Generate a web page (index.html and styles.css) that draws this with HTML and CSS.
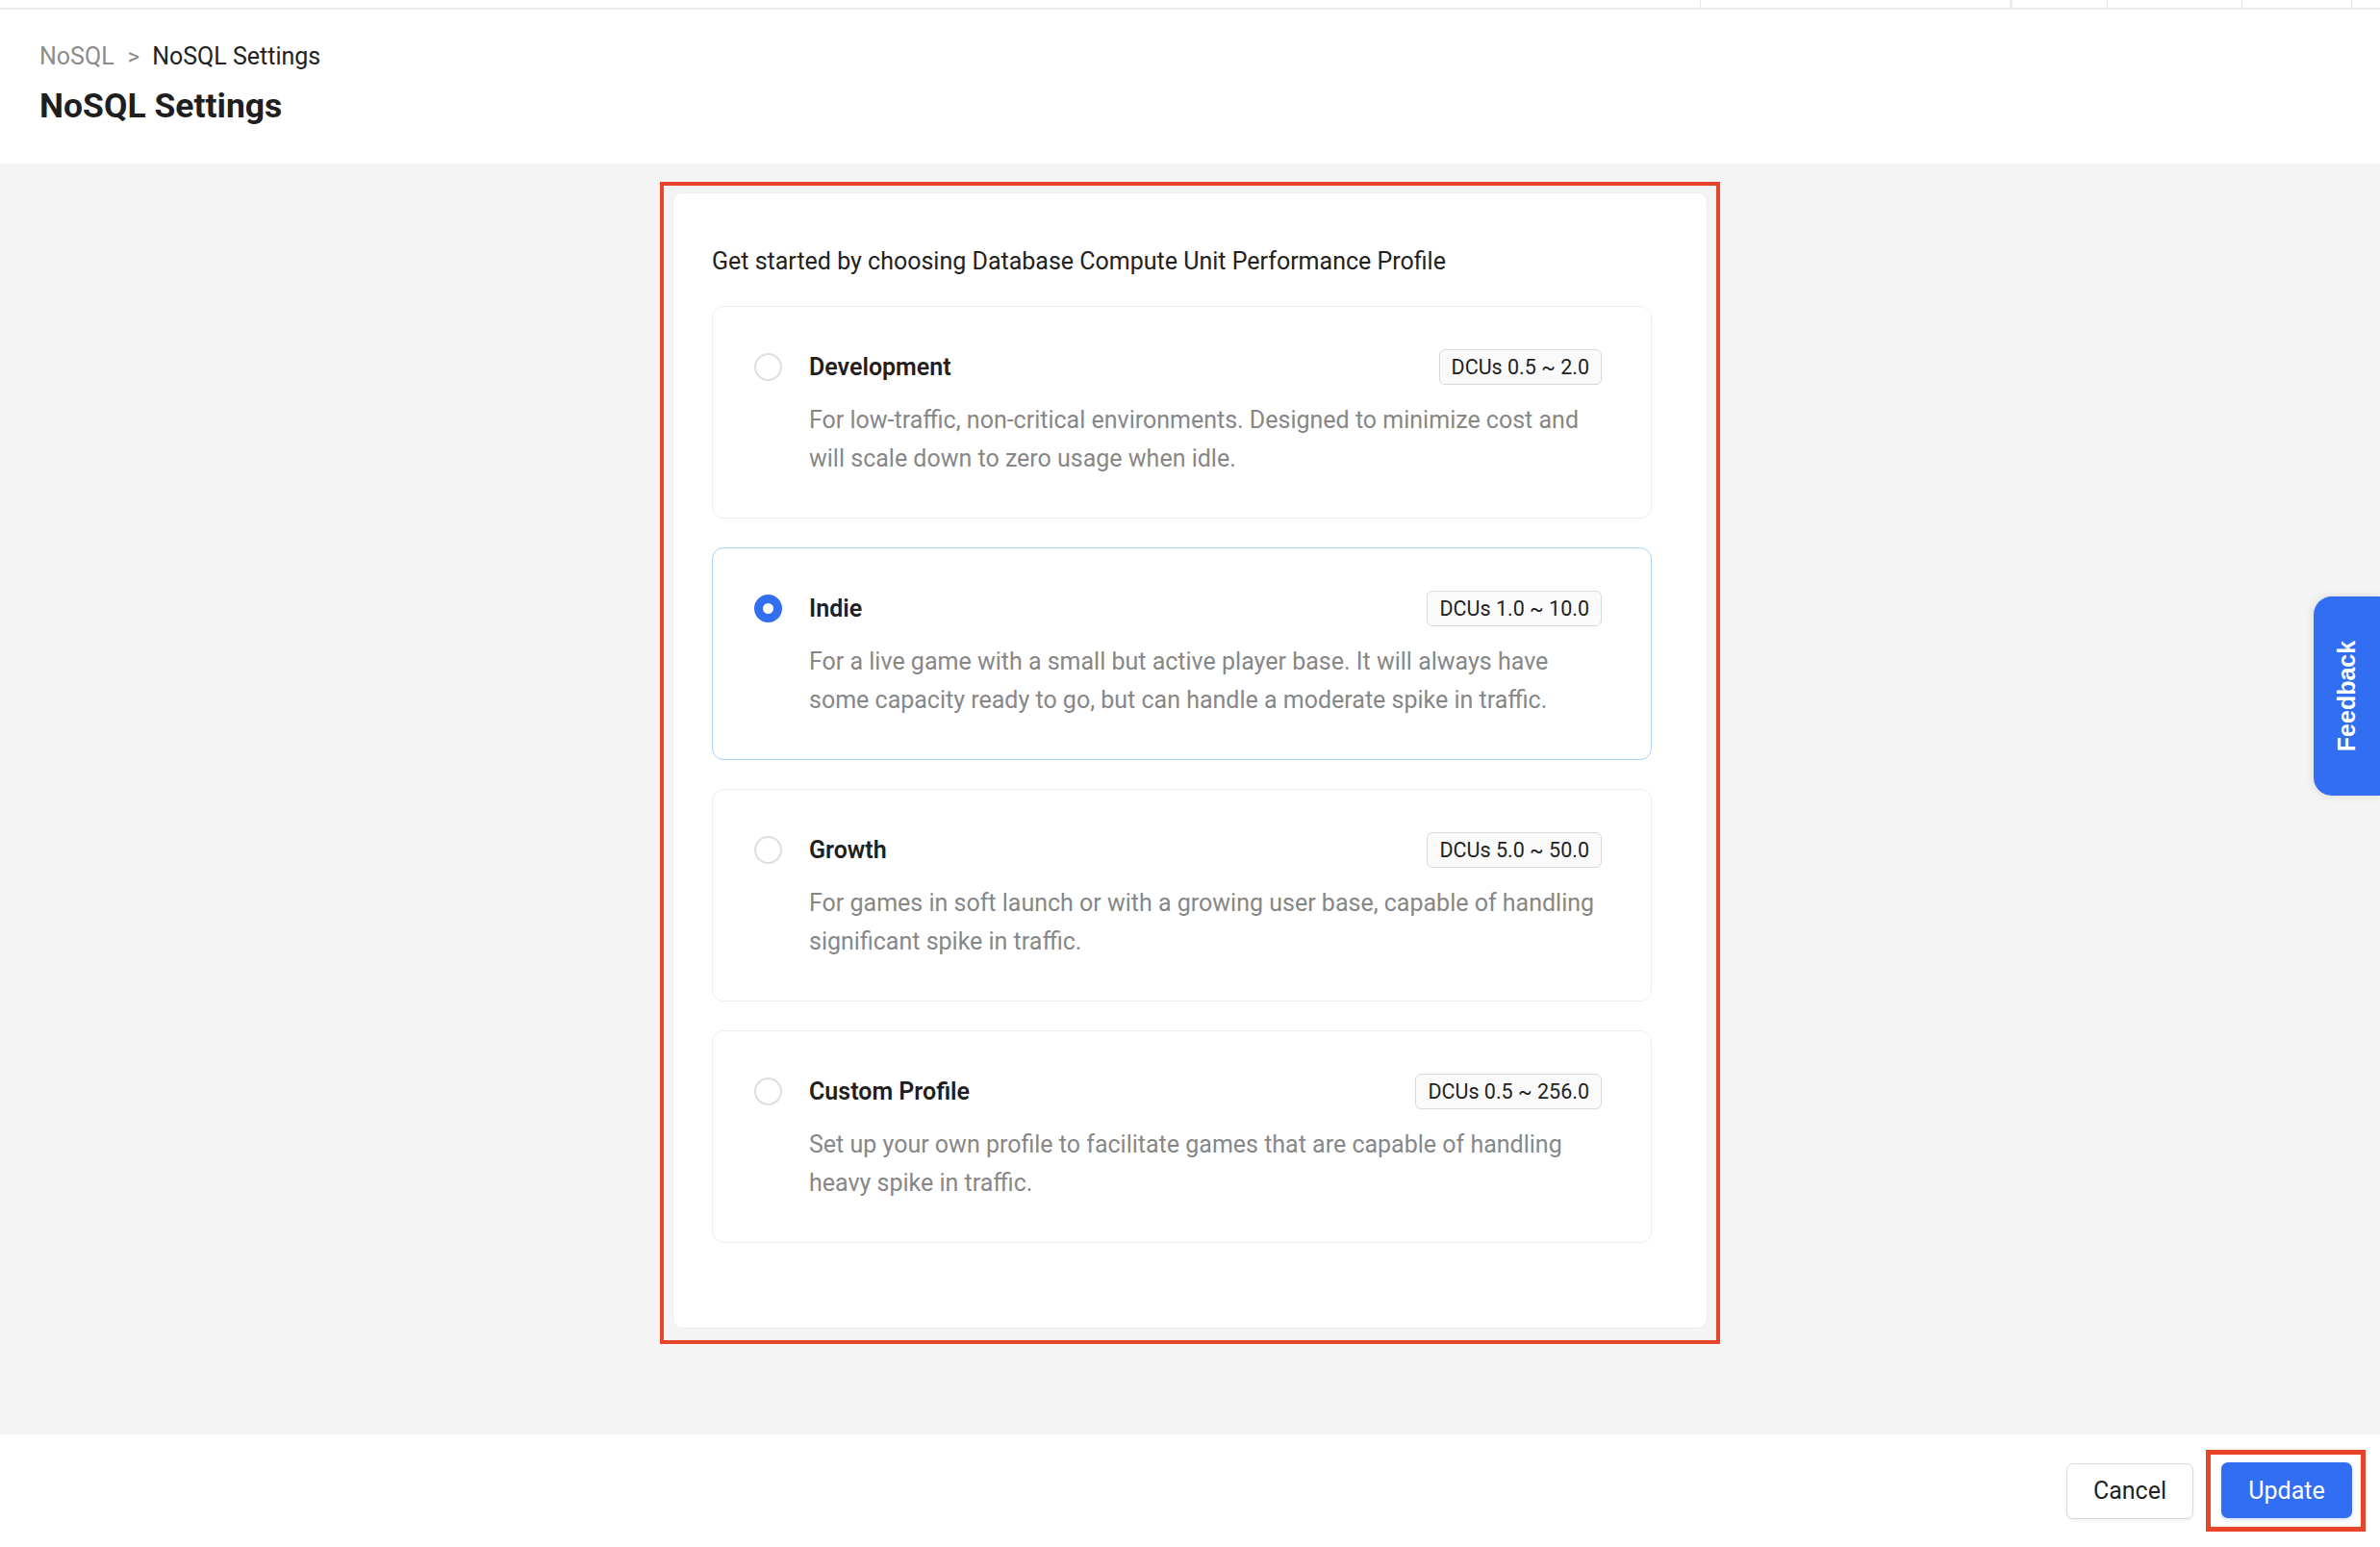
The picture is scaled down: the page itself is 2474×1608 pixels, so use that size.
FILE: index.html
```html
<!DOCTYPE html>
<html lang="en">
<head>
<meta charset="utf-8">
<title>NoSQL Settings</title>
<link rel="stylesheet" href="styles.css">
</head>
<body>
<div class="page">
  <div class="topstrip">
    <span class="div d1"></span>
    <span class="div d2"></span>
    <span class="div d3"></span>
    <span class="div d4"></span>
    <span class="div d5"></span>
  </div>
  <header class="header">
    <nav class="crumbs"><span class="crumb-link">NoSQL</span><span class="crumb-sep">&gt;</span><span class="crumb-current">NoSQL Settings</span></nav>
    <h1 class="title">NoSQL Settings</h1>
  </header>
  <main class="main">
    <div class="annot annot-panel">
      <section class="panel">
        <p class="intro">Get started by choosing Database Compute Unit Performance Profile</p>
        <div class="options">
          <div class="option">
            <div class="opt-head">
              <span class="radio"></span>
              <span class="opt-title">Development</span>
              <span class="badge">DCUs 0.5 ~ 2.0</span>
            </div>
            <p class="opt-desc">For low-traffic, non-critical environments. Designed to minimize cost and will scale down to zero usage when idle.</p>
          </div>
          <div class="option selected">
            <div class="opt-head">
              <span class="radio checked"></span>
              <span class="opt-title">Indie</span>
              <span class="badge">DCUs 1.0 ~ 10.0</span>
            </div>
            <p class="opt-desc">For a live game with a small but active player base. It will always have some capacity ready to go, but can handle a moderate spike in traffic.</p>
          </div>
          <div class="option">
            <div class="opt-head">
              <span class="radio"></span>
              <span class="opt-title">Growth</span>
              <span class="badge">DCUs 5.0 ~ 50.0</span>
            </div>
            <p class="opt-desc">For games in soft launch or with a growing user base, capable of handling significant spike in traffic.</p>
          </div>
          <div class="option">
            <div class="opt-head">
              <span class="radio"></span>
              <span class="opt-title">Custom Profile</span>
              <span class="badge">DCUs 0.5 ~ 256.0</span>
            </div>
            <p class="opt-desc">Set up your own profile to facilitate games that are capable of handling heavy spike in traffic.</p>
          </div>
        </div>
      </section>
    </div>
  </main>
  <footer class="footer">
    <button class="btn btn-cancel">Cancel</button>
    <div class="annot annot-btn">
      <button class="btn btn-primary">Update</button>
    </div>
  </footer>
  <div class="feedback"><span class="feedback-text">Feedback</span></div>
</div>
</body>
</html>
```
FILE: styles.css
```css
* { box-sizing: border-box; }
html, body { margin: 0; padding: 0; }
body {
  font-family: Roboto, "Liberation Sans", Arial, sans-serif;
  color: #222222;
  background: #ffffff;
}
.page {
  position: relative;
  height: 1608px;
  display: flex;
  flex-direction: column;
  overflow: hidden;
}
.topstrip {
  position: relative;
  height: 10px;
  border-bottom: 2px solid #ebebeb;
  flex: none;
}
.div {
  position: absolute;
  top: 0;
  height: 8px;
  width: 1px;
  background: #e3e3e3;
}
.d1 { left: 1767px; }
.d2 { left: 2089px; width: 3px; background: #ececec; }
.d3 { left: 2190px; }
.d4 { left: 2330px; }
.d5 { left: 2444px; }

.header {
  flex: none;
  height: 160px;
  padding: 31px 41px 0;
  background: #ffffff;
}
.crumbs {
  font-size: 25px;
  line-height: 36px;
  display: flex;
  align-items: center;
}
.crumb-link { color: #8c8c8c; }
.crumb-sep { color: #8c8c8c; margin: 0 13px 0 14px; font-size: 24px; }
.crumb-current { color: #222222; }
.title {
  margin: 9px 0 0;
  font-size: 35.5px;
  line-height: 48px;
  font-weight: 700;
  color: #1f1f1f;
}

.main {
  flex: 1;
  background: #f4f4f4;
  display: flex;
  flex-direction: column;
  align-items: center;
  padding-top: 19px;
}
.annot {
  border: 4px solid #e8442a;
}
.annot-panel {
  width: 1102px;
  padding: 7px 9px 12px 9px;
}
.panel {
  background: #ffffff;
  border: 1px solid #ececec;
  border-radius: 10px;
  padding: 52px 57px 88px 40px;
}
.intro {
  margin: 0;
  font-size: 25px;
  line-height: 37px;
  color: #222222;
}
.options {
  margin-top: 28px;
  display: flex;
  flex-direction: column;
  gap: 30px;
}
.option {
  border: 1px solid #eeeeee;
  border-radius: 12px;
  padding: 44px 51px 42px 43px;
  height: 221px;
}
.option.selected {
  border-color: #a9d3f7;
}
.opt-head {
  display: flex;
  align-items: center;
  height: 37px;
}
.radio {
  flex: none;
  width: 29px;
  height: 29px;
  border-radius: 50%;
  border: 2px solid #dedede;
  background: #ffffff;
  margin-right: 28px;
}
.radio.checked {
  border: 9px solid #316ef0;
  background: #ffffff;
}
.opt-title {
  flex: 1;
  font-size: 25px;
  font-weight: 600;
  color: #1f1f1f;
}
.badge {
  flex: none;
  height: 37px;
  padding: 0 12px;
  border: 1px solid #d9d9d9;
  border-radius: 6px;
  background: #fafafa;
  font-size: 21.5px;
  line-height: 35px;
  color: #1f1f1f;
}
.opt-desc {
  margin: 17px 0 0 57px;
  font-size: 25px;
  line-height: 40px;
  color: #878787;
}

.footer {
  flex: none;
  height: 117px;
  background: #ffffff;
  display: flex;
  justify-content: flex-end;
  align-items: center;
  padding-right: 15px;
  gap: 13px;
}
.btn {
  font-family: Roboto, "Liberation Sans", Arial, sans-serif;
  font-size: 25px;
  height: 58px;
  border-radius: 7px;
  cursor: pointer;
}
.btn-cancel {
  width: 132px;
  background: #ffffff;
  border: 1px solid #d9d9d9;
  color: #222222;
  box-shadow: 0 2px 3px rgba(0,0,0,0.06);
}
.annot-btn {
  border-width: 5px;
  padding: 8px 9px 9px 11px;
  display: flex;
}
.btn-primary {
  width: 136px;
  background: #316ef2;
  border: none;
  color: #ffffff;
  box-shadow: 0 2px 4px rgba(49,110,242,0.2);
}

.feedback {
  position: absolute;
  right: 0;
  top: 620px;
  width: 69px;
  height: 207px;
  background: #316ef2;
  border-radius: 19px 0 0 19px;
  box-shadow: 0 0 10px rgba(0,0,0,0.12);
  display: flex;
  align-items: center;
  justify-content: center;
}
.feedback-text {
  transform: rotate(-90deg);
  color: #ffffff;
  font-family: "Liberation Sans", Arial, sans-serif;
  font-weight: 700;
  font-size: 25px;
  white-space: nowrap;
}
```
